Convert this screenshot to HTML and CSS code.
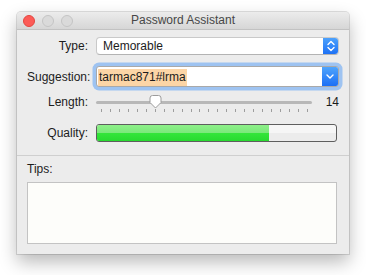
FILE: index.html
```html
<!DOCTYPE html>
<html lang="en">
<head>
    <meta charset="UTF-8">
    <meta name="viewport" content="width=device-width, initial-scale=1.0">
    <title>Password Assistant</title>
    <link rel="stylesheet" href="styles.css">
</head>
<body>

    <div class="window">
        <div class="titlebar">
            <div class="lights">
                <span class="light light-close"></span>
                <span class="light"></span>
                <span class="light"></span>
            </div>
            <div class="title">Password Assistant</div>
            <div></div>
        </div>

        <div class="form">
            <div class="row row-type">
                <span class="label">Type:</span>
                <div class="popup">
                    <span class="popup-text">Memorable</span>
                    <span class="stepper">
                        <svg width="16" height="18" viewBox="0 0 16 18">
                            <path d="M5 7.5 L8 4.5 L11 7.5" fill="none" stroke="#fff" stroke-width="1.4" stroke-linecap="round" stroke-linejoin="round"/>
                            <path d="M5 10.5 L8 13.5 L11 10.5" fill="none" stroke="#fff" stroke-width="1.4" stroke-linecap="round" stroke-linejoin="round"/>
                        </svg>
                    </span>
                </div>
            </div>

            <div class="row row-suggestion">
                <span class="label">Suggestion:</span>
                <div class="combo">
                    <span class="combo-text"><span class="selected">tarmac871#lrma</span></span>
                    <span class="dropdown">
                        <svg width="16" height="19" viewBox="0 0 16 19">
                            <path d="M5 8 L8 11 L11 8" fill="none" stroke="#fff" stroke-width="1.4" stroke-linecap="round" stroke-linejoin="round"/>
                        </svg>
                    </span>
                </div>
            </div>

            <div class="row row-length">
                <span class="label label-top">Length:</span>
                <div class="slider">
                    <div class="track"></div>
                    <div class="ticks" id="ticks"></div>
                    <svg class="thumb" width="13" height="14" viewBox="0 0 13 14">
                        <path d="M1 3 Q1 0.5 3.5 0.5 L9.5 0.5 Q12 0.5 12 3 L12 7.5 L6.5 13 L1 7.5 Z" fill="#fff" stroke="#9c9c9c" stroke-width="1"/>
                    </svg>
                </div>
                <span class="length-value">14</span>
            </div>

            <div class="row row-quality">
                <span class="label">Quality:</span>
                <div class="meter">
                    <div class="meter-fill" style="width: 72%"></div>
                </div>
            </div>
        </div>

        <div class="tips">
            <div class="tips-label">Tips:</div>
            <div class="tips-box"></div>
        </div>
    </div>

    <script>
        // 24 tick marks for lengths 8 to 31
        const ticks = document.getElementById('ticks');
        for (let i = 0; i < 24; i++) {
            const tick = document.createElement('span');
            tick.classList.add('tick');
            ticks.appendChild(tick);
        }
    </script>

</body>
</html>
```

FILE: styles.css
```css
html, body {
    height: 100%;
}
body {
    margin: 0;
    padding: 0;
    background-color: #fff;
    font-family: 'Liberation Sans', Arial, sans-serif;
    font-size: 12px;
    color: #1c1c1c;
    overflow: hidden;
}
.window {
    margin: 12px 0 0 17px;
    width: 332px;
    height: 242px;
    background-color: #ececec;
    border-radius: 4px 4px 0 0;
    box-shadow: 0 0 0 1px rgba(0,0,0,0.12), 0 8px 18px rgba(0,0,0,0.28);
    display: flex;
    flex-direction: column;
    overflow: hidden;
}
.titlebar {
    height: 17px;
    display: grid;
    grid-template-columns: 1fr auto 1fr;
    align-items: center;
    background: linear-gradient(#ececec, #d6d6d6);
    border-bottom: 1px solid #c2c2c2;
}
.lights {
    display: flex;
    gap: 7px;
    padding-left: 6px;
}
.light {
    width: 10px;
    height: 10px;
    border-radius: 50%;
    background-color: #dadada;
    border: 0.5px solid #c4c4c4;
}
.light-close {
    background-color: #fc5b57;
    border-color: #e2463f;
}
.title {
    color: #474747;
    font-size: 12px;
    line-height: 17px;
}
.form {
    padding: 7px 10px 0 10px;
    border-bottom: 1px solid #cfcfcf;
    height: 118px;
}
.row {
    display: flex;
    align-items: center;
}
.label {
    width: 61px;
    margin-right: 8px;
    text-align: right;
    flex-shrink: 0;
}
.row-type {
    height: 18px;
}
.popup {
    flex: 1;
    height: 18px;
    box-sizing: border-box;
    display: flex;
    align-items: center;
    background-color: #fff;
    border: 1px solid #c9c9c9;
    border-bottom-color: #b3b3b3;
    border-radius: 4px;
    overflow: hidden;
}
.popup-text {
    flex: 1;
    padding-left: 6px;
    line-height: 16px;
}
.stepper {
    width: 16px;
    height: 18px;
    margin-right: -1px;
    background: linear-gradient(#4fa4fc, #1b6ff5);
    display: flex;
}
.row-suggestion {
    margin-top: 11px;
    height: 21px;
}
.combo {
    flex: 1;
    height: 21px;
    box-sizing: border-box;
    display: flex;
    align-items: center;
    background-color: #fff;
    border: 1px solid #a9a9a9;
    border-radius: 3px;
    box-shadow: 0 0 0 3.5px #9ec3f1;
}
.combo-text {
    flex: 1;
    padding-left: 1px;
}
.selected {
    background-color: #fcd5a6;
    padding: 1px 1px 2px 1px;
    line-height: 14px;
}
.dropdown {
    width: 16px;
    height: 19px;
    background: linear-gradient(#4fa4fc, #1b6ff5);
    border-radius: 0 2px 2px 0;
    display: flex;
}
.row-length {
    margin-top: 9px;
    height: 17px;
    align-items: flex-start;
}
.label-top {
    line-height: 12px;
}
.slider {
    position: relative;
    width: 216px;
    height: 17px;
}
.track {
    margin-top: 5px;
    height: 3px;
    background-color: #b8b8b8;
    border-radius: 2px;
}
.ticks {
    display: flex;
    justify-content: space-between;
    padding: 0 4px 0 5px;
    margin-top: 5px;
}
.tick {
    width: 1px;
    height: 3px;
    background-color: #9d9d9d;
}
.thumb {
    position: absolute;
    left: 53px;
    top: -1px;
}
.length-value {
    flex: 1;
    text-align: right;
    line-height: 12px;
}
.row-quality {
    margin-top: 11px;
    height: 18px;
}
.meter {
    flex: 1;
    margin-right: 2px;
    height: 18px;
    box-sizing: border-box;
    border: 1px solid #5e5e5e;
    border-radius: 3px;
    background: linear-gradient(#f6f6f6 50%, #ececec 50%);
    overflow: hidden;
    display: flex;
}
.meter-fill {
    background: linear-gradient(#8ef08a, #7ae87a 50%, #34e63a 50%, #28da30);
}
.tips {
    flex: 1;
    padding: 6px 12px 10px 10px;
    display: flex;
    flex-direction: column;
}
.tips-label {
    line-height: 14px;
}
.tips-box {
    flex: 1;
    margin-top: 6px;
    background-color: #fdfdfa;
    border: 1px solid #c3c3c3;
}
```
